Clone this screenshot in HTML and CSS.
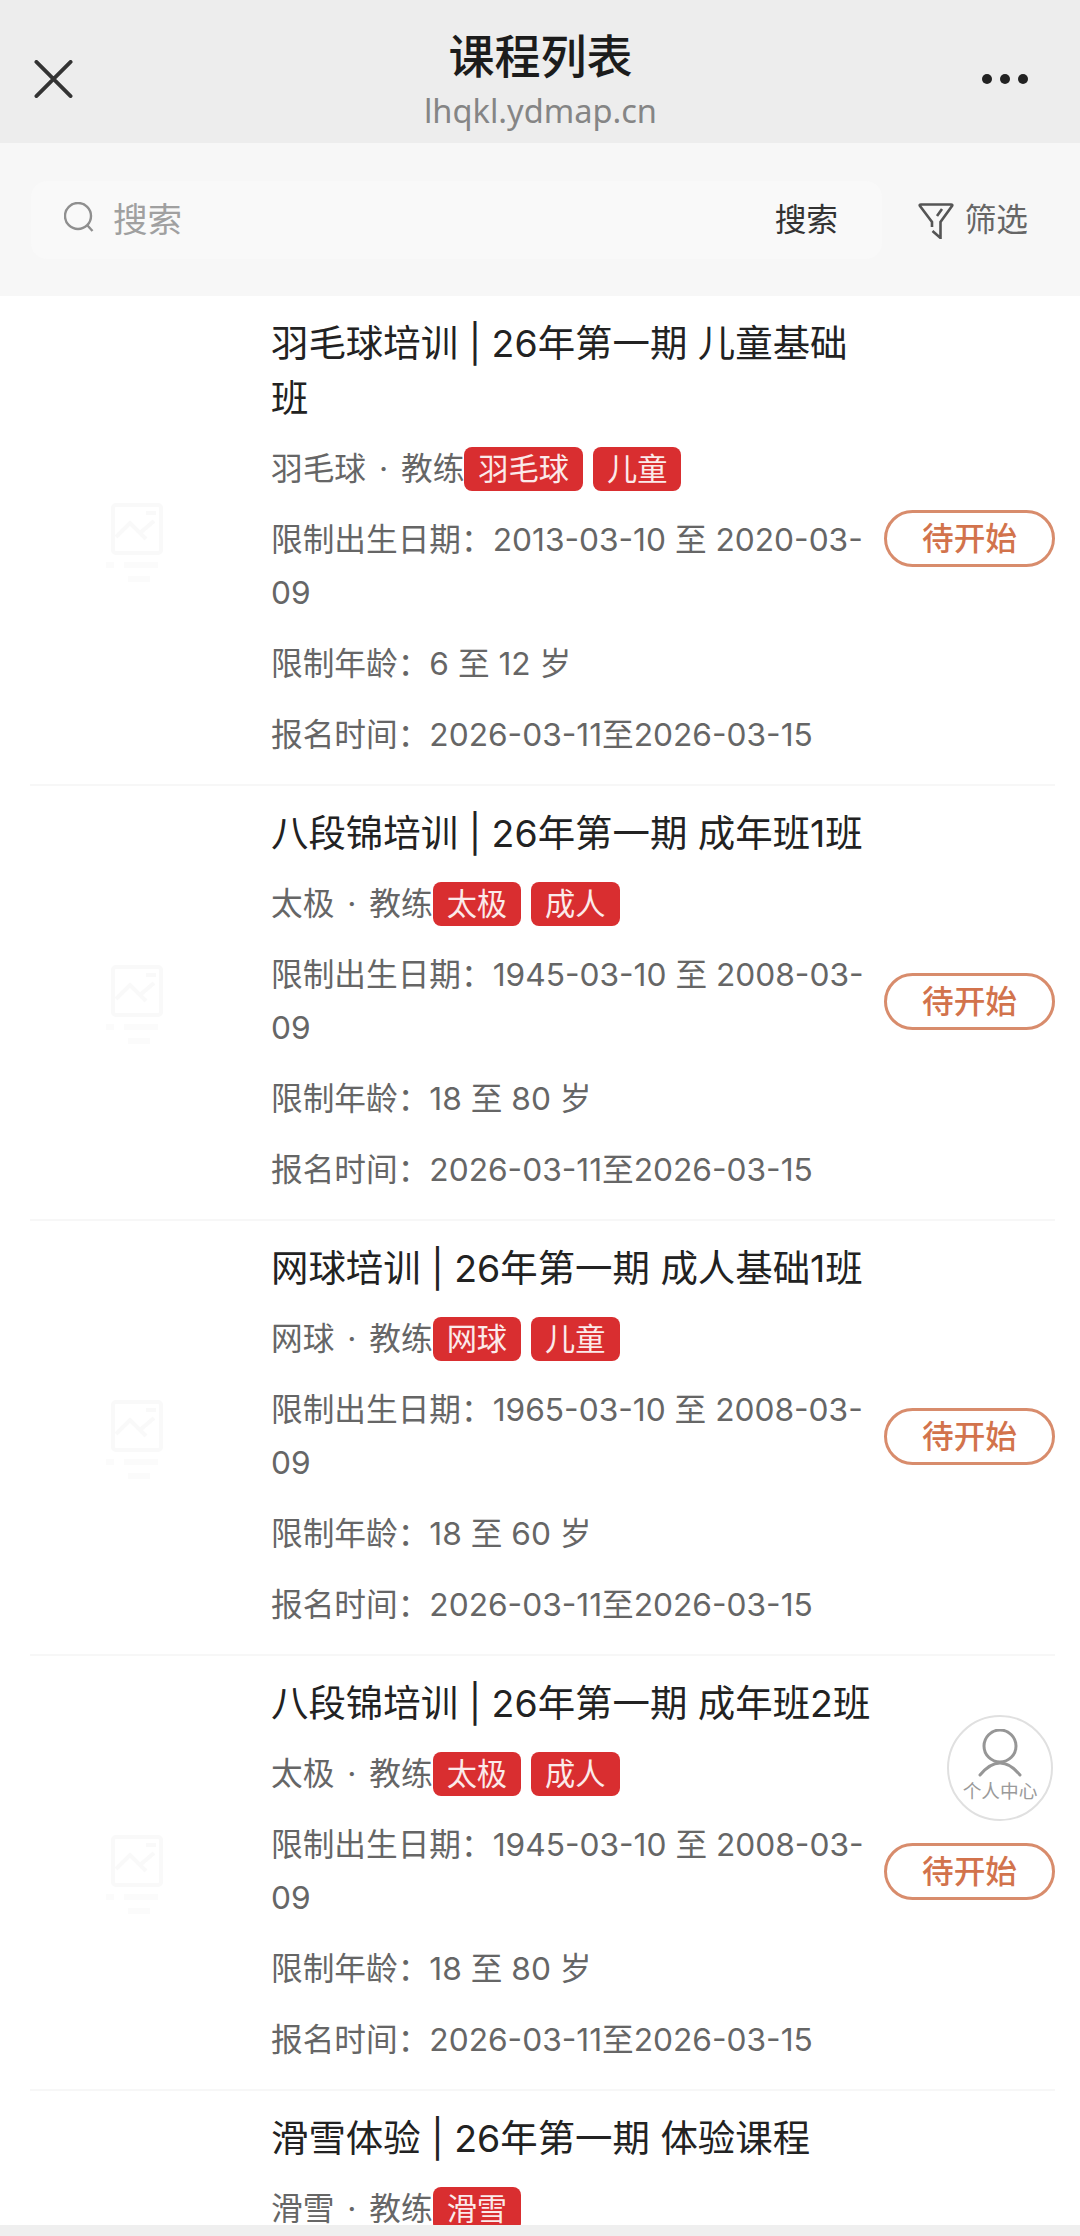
FILE: index.html

```html
<!DOCTYPE html>
<html lang="zh-CN">
<head>
<meta charset="utf-8">
<title>课程列表</title>
<link rel="stylesheet" href="styles.css">
</head>
<body>
<div class="page">
  <header class="topbar">
    <svg class="close-icon" viewBox="0 0 40 40"><path d="M2 2 L38 38 M38 2 L2 38"/></svg>
    <div class="topbar-title">
      <div class="title-main">课程列表</div>
      <div class="title-url">lhqkl.ydmap.cn</div>
    </div>
    <div class="more-dots"><i></i><i></i><i></i></div>
  </header>

  <div class="filterbar">
    <div class="searchbox">
      <svg class="search-icon" viewBox="0 0 30 30"><circle cx="14" cy="14" r="13"/><path d="M23.5 23.5 L28.5 29"/></svg>
      <span class="search-hint">搜索</span>
      <span class="search-btn">搜索</span>
    </div>
    <div class="filter-btn">
      <svg class="filter-icon" viewBox="0 0 36 36"><path d="M3 1.5 H33 Q35 1.5 34 3 L22.5 19 V35 L14.5 28 M14 24 V19 L2 3 Q1 1.5 3 1.5 M19 13 L24 6"/></svg>
      <span>筛选</span>
    </div>
  </div>

  <main class="list">
    <section class="row">
      <div class="thumb"><svg viewBox="0 0 70 80"><rect x="11" y="2" width="48" height="48" rx="3"/><path d="M14 34 L28 20 L44 36 M38 30 L52 18 M44 10 H54"/><path class="thumb-text" d="M4 62 H12 M22 62 H56 M26 76 H48"/></svg></div>
      <div class="info">
        <h2 class="name">羽毛球培训 | 26年第一期 儿童基础班</h2>
        <div class="line tags-line">羽毛球 · 教练<span class="tag">羽毛球</span><span class="tag">儿童</span></div>
        <div class="line">限制出生日期<span class="colon">：</span>2013-03-10 至 2020-03-<wbr>09</div>
        <div class="line">限制年龄<span class="colon">：</span>6 至 12 岁</div>
        <div class="line">报名时间<span class="colon">：</span>2026-03-11至2026-03-15</div>
      </div>
      <div class="status">待开始</div>
    </section>

    <section class="row">
      <div class="thumb"><svg viewBox="0 0 70 80"><rect x="11" y="2" width="48" height="48" rx="3"/><path d="M14 34 L28 20 L44 36 M38 30 L52 18 M44 10 H54"/><path class="thumb-text" d="M4 62 H12 M22 62 H56 M26 76 H48"/></svg></div>
      <div class="info">
        <h2 class="name">八段锦培训 | 26年第一期 成年班1班</h2>
        <div class="line tags-line">太极 · 教练<span class="tag">太极</span><span class="tag">成人</span></div>
        <div class="line">限制出生日期<span class="colon">：</span>1945-03-10 至 2008-03-<wbr>09</div>
        <div class="line">限制年龄<span class="colon">：</span>18 至 80 岁</div>
        <div class="line">报名时间<span class="colon">：</span>2026-03-11至2026-03-15</div>
      </div>
      <div class="status">待开始</div>
    </section>

    <section class="row">
      <div class="thumb"><svg viewBox="0 0 70 80"><rect x="11" y="2" width="48" height="48" rx="3"/><path d="M14 34 L28 20 L44 36 M38 30 L52 18 M44 10 H54"/><path class="thumb-text" d="M4 62 H12 M22 62 H56 M26 76 H48"/></svg></div>
      <div class="info">
        <h2 class="name">网球培训 | 26年第一期 成人基础1班</h2>
        <div class="line tags-line">网球 · 教练<span class="tag">网球</span><span class="tag">儿童</span></div>
        <div class="line">限制出生日期<span class="colon">：</span>1965-03-10 至 2008-03-<wbr>09</div>
        <div class="line">限制年龄<span class="colon">：</span>18 至 60 岁</div>
        <div class="line">报名时间<span class="colon">：</span>2026-03-11至2026-03-15</div>
      </div>
      <div class="status">待开始</div>
    </section>

    <section class="row">
      <div class="thumb"><svg viewBox="0 0 70 80"><rect x="11" y="2" width="48" height="48" rx="3"/><path d="M14 34 L28 20 L44 36 M38 30 L52 18 M44 10 H54"/><path class="thumb-text" d="M4 62 H12 M22 62 H56 M26 76 H48"/></svg></div>
      <div class="info">
        <h2 class="name">八段锦培训 | 26年第一期 成年班2班</h2>
        <div class="line tags-line">太极 · 教练<span class="tag">太极</span><span class="tag">成人</span></div>
        <div class="line">限制出生日期<span class="colon">：</span>1945-03-10 至 2008-03-<wbr>09</div>
        <div class="line">限制年龄<span class="colon">：</span>18 至 80 岁</div>
        <div class="line">报名时间<span class="colon">：</span>2026-03-11至2026-03-15</div>
      </div>
      <div class="status">待开始</div>
    </section>

    <section class="row">
      <div class="thumb"></div>
      <div class="info">
        <h2 class="name">滑雪体验 | 26年第一期 体验课程</h2>
        <div class="line tags-line">滑雪 · 教练<span class="tag">滑雪</span></div>
      </div>
    </section>
  </main>

  <div class="bottombar"></div>

  <div class="usercenter">
    <svg class="user-icon" viewBox="0 0 44 48"><circle cx="22" cy="17" r="16"/><path d="M2 46 Q22 22 42 46"/></svg>
    <span class="user-label">个人中心</span>
  </div>
</div>
</body>
</html>
```

FILE: styles.css

```css
* {
  box-sizing: border-box;
}

html, body {
  margin: 0;
  padding: 0;
}

body {
  font-family: Inter, "Noto Sans CJK SC", sans-serif;
  background: #fff;
}

.page {
  position: relative;
  width: 1080px;
  height: 2236px;
  overflow: hidden;
  display: flex;
  flex-direction: column;
}

/* top bar */
.topbar {
  height: 143px;
  flex: none;
  background: #ededed;
  display: flex;
  align-items: flex-start;
  justify-content: space-between;
  padding: 60px 52px 0 34px;
}

.close-icon {
  width: 39px;
  height: 38px;
  fill: none;
  stroke: #333;
  stroke-width: 4;
  stroke-linecap: round;
}

.topbar-title {
  text-align: center;
  margin-top: -34px;
  margin-left: 26px;
}

.title-main {
  font-size: 46px;
  font-weight: 500;
  line-height: 60px;
  color: #1c1c1c;
}

.title-url {
  margin-top: 2px;
  font-family: "Noto Sans", sans-serif;
  font-size: 32.6px;
  line-height: 46px;
  color: #858585;
}

.more-dots {
  display: flex;
  gap: 8px;
  margin-top: 14px;
}

.more-dots i {
  display: block;
  width: 10px;
  height: 10px;
  border-radius: 50%;
  background: #222;
}

/* search row */
.filterbar {
  height: 153px;
  flex: none;
  background: #f7f7f7;
  display: flex;
  align-items: center;
  padding: 0 52px 0 31px;
  justify-content: space-between;
}

.searchbox {
  width: 851px;
  height: 78px;
  border-radius: 16px;
  background: #f9f9f9;
  display: flex;
  align-items: center;
  padding: 0 44px 6px 33px;
}

.search-icon {
  width: 30px;
  height: 30px;
  fill: none;
  stroke: #8f8f8f;
  stroke-width: 2.4;
}

.search-hint {
  font-size: 34.56px;
  color: #a0a0a0;
  margin-left: 19px;
  flex: 1;
}

.search-btn {
  font-size: 31.68px;
  color: #333;
}

.filter-btn {
  display: flex;
  align-items: center;
  gap: 11px;
  padding-bottom: 6px;
  font-size: 31.68px;
  color: #666;
}

.filter-icon {
  width: 36px;
  height: 36px;
  margin-top: 8px;
  fill: none;
  stroke: #555;
  stroke-width: 2.6;
}

/* course list */
.list {
  flex: 1;
  overflow: hidden;
  padding: 0 25px 0 30px;
}

.row {
  display: flex;
  align-items: center;
  padding: 20px 0 23px;
  border-bottom: 2px solid #f7f7f7;
}

.thumb {
  width: 241px;
  flex: none;
  padding: 8px 0 0 72px;
}

.thumb svg {
  display: block;
  width: 70px;
  height: 80px;
  fill: none;
  stroke: #f9f9f9;
  stroke-width: 4;
}

.thumb-text {
  stroke: #fbfbfb;
  stroke-width: 6;
}

.info {
  width: 600px;
  flex: none;
  margin-right: 13px;
}

.name {
  margin: 0;
  font-size: 37.44px;
  font-weight: 400;
  line-height: 55px;
  color: #222;
}

.line {
  margin-top: 18px;
  font-size: 31.68px;
  line-height: 53px;
  color: #666;
}

.colon {
  font-family: "Noto Sans CJK TC", sans-serif;
  line-height: 1;
}

.tags-line {
  margin-top: 16px;
  display: flex;
  align-items: center;
  word-spacing: 4px;
}

.tag {
  height: 44px;
  line-height: 44px;
  padding: 0 14px;
  margin-right: 10px;
  border-radius: 8px;
  font-size: 30.24px;
  color: #fbeaea;
  background: #d92e30;
}

.status {
  width: 171px;
  height: 57px;
  flex: none;
  border: 3px solid #d88c6c;
  border-radius: 29px;
  font-size: 31.68px;
  font-weight: 500;
  line-height: 51px;
  text-align: center;
  color: #d2734c;
}

.bottombar {
  height: 11px;
  flex: none;
  background: #efefef;
}

/* floating button */
.usercenter {
  position: absolute;
  left: 947px;
  top: 1715px;
  width: 106px;
  height: 106px;
  border: 2px solid #e0e0e0;
  border-radius: 50%;
  background: #fff;
  display: flex;
  flex-direction: column;
  align-items: center;
  padding-top: 12px;
  font-size: 18.7px;
  line-height: 24px;
  color: #9a9a9a;
}

.user-icon {
  flex: none;
  width: 44px;
  height: 48px;
  fill: none;
  stroke: #969696;
  stroke-width: 3;
  stroke-linecap: round;
}

.user-label {
  margin-top: 3px;
  white-space: nowrap;
}
```
